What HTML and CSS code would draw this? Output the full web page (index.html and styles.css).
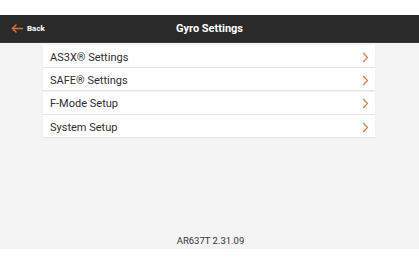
FILE: index.html
```html
<!DOCTYPE html>
<html>
<head>
<meta charset="utf-8">
<link rel="stylesheet" href="styles.css">
</head>
<body>
<div class="screen">
  <div class="topgap"></div>
  <header class="bar">
    <div class="back">
      <svg class="arrow" width="12" height="9" viewBox="0 0 12 9"><path d="M11.5 4.5H1.5M5 1L1.5 4.5L5 8" fill="none" stroke="#e8692a" stroke-width="1.6" stroke-linecap="round" stroke-linejoin="round"/></svg>
      <span>Back</span>
    </div>
    <div class="title">Gyro Settings</div>
  </header>
  <main class="content">
    <ul class="list">
      <li class="row"><span>AS3X® Settings</span><svg class="chev" width="7" height="11" viewBox="0 0 7 11"><path d="M1.2 1L5.5 5.5L1.2 10" fill="none" stroke="#d67a45" stroke-width="1.2"/></svg></li>
      <li class="row"><span>SAFE® Settings</span><svg class="chev" width="7" height="11" viewBox="0 0 7 11"><path d="M1.2 1L5.5 5.5L1.2 10" fill="none" stroke="#d67a45" stroke-width="1.2"/></svg></li>
      <li class="row"><span>F-Mode Setup</span><svg class="chev" width="7" height="11" viewBox="0 0 7 11"><path d="M1.2 1L5.5 5.5L1.2 10" fill="none" stroke="#d67a45" stroke-width="1.2"/></svg></li>
      <li class="row"><span>System Setup</span><svg class="chev" width="7" height="11" viewBox="0 0 7 11"><path d="M1.2 1L5.5 5.5L1.2 10" fill="none" stroke="#d67a45" stroke-width="1.2"/></svg></li>
    </ul>
    <div class="footer">AR637T 2.31.09</div>
  </main>
</div>
</body>
</html>
```
FILE: styles.css
```css
* { box-sizing: border-box; }
html, body { margin: 0; padding: 0; background: #ffffff; }
body { width: 419px; height: 265px; overflow: hidden; font-family: Roboto, "Liberation Sans", sans-serif; }
.screen { display: flex; flex-direction: column; height: 265px; }
.topgap { height: 15px; background: #ffffff; }
.bar { position: relative; height: 28px; background: #2a2a2a; display: flex; align-items: center; border-bottom: 1px solid #3a3a3a; }
.back { display: flex; align-items: center; gap: 4px; padding-left: 11px; color: #ffffff; font-size: 8px; font-weight: 700; }
.arrow { display: block; }
.title { position: absolute; left: 0; right: 0; top: 0; bottom: 0; display: flex; align-items: center; justify-content: center; color: #ffffff; font-size: 11px; font-weight: 700; pointer-events: none; }
.content { height: 206px; background: #f4f4f4; display: flex; flex-direction: column; justify-content: space-between; padding-top: 2px; }
.list { list-style: none; margin: 0 0 0 43px; padding: 0; width: 332px; display: flex; flex-direction: column; gap: 1.4px; }
.row { height: 22px; background: #ffffff; display: flex; align-items: center; justify-content: space-between; padding: 2px 6px 0 7px; color: #2e2e2e; font-size: 11px; box-shadow: 0 1px 1px rgba(0,0,0,0.06); }
.chev { display: block; }
.footer { text-align: center; font-size: 9.5px; color: #333333; padding-bottom: 3px; padding-left: 2px; }
```
